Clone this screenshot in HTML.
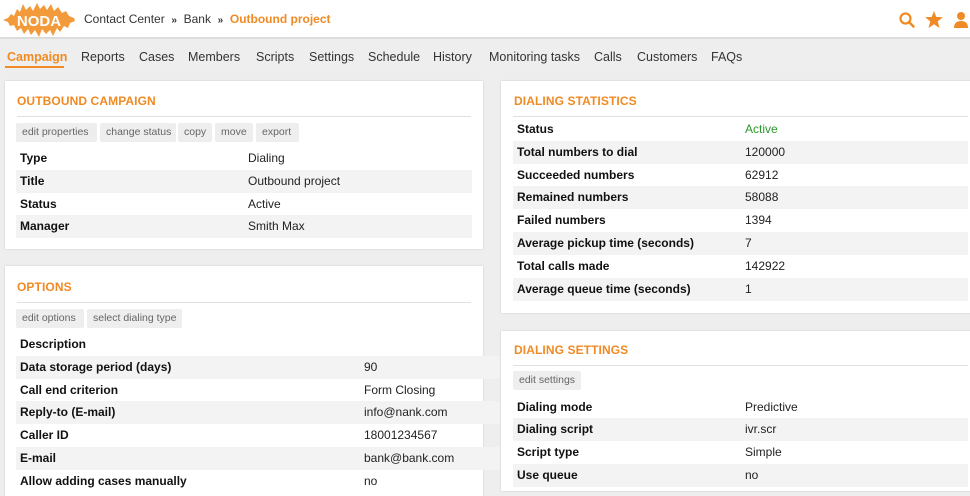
<!DOCTYPE html>
<html><head><meta charset="utf-8"><style>
*{margin:0;padding:0;box-sizing:border-box}
body{width:970px;height:480px;overflow:hidden;background:#eeeeee;font-family:"Liberation Sans",sans-serif;font-size:12px;color:#222;position:relative}
.a{position:absolute;white-space:nowrap}
#hdr{position:absolute;left:0;top:0;width:970px;height:39px;background:#fff;border-bottom:2px solid #dcdcdc}
.nav{position:absolute;top:50px;font-size:12.5px;color:#333;white-space:nowrap}
.card{position:absolute;background:#fff;box-shadow:0 0 2px rgba(0,0,0,.15)}
.ttl{position:absolute;color:#f08a24;font-weight:bold;font-size:12px;letter-spacing:.1px}
.ln{position:absolute;height:1px;background:#e0e0e0}
.btn{position:absolute;height:19px;line-height:19px;background:#eeeeee;color:#666;font-size:10.5px;padding:0 6px;border-radius:2px;white-space:nowrap}
.row{position:absolute;height:23px;line-height:23px;font-size:12px}
.row.s{background:#f3f3f3}
.row b{position:absolute;left:4px;font-weight:bold;color:#111}
.row span{position:absolute}
</style></head><body>
<div id="hdr"></div>
<svg class="a" style="left:2px;top:1px" width="74" height="38" viewBox="0 0 74 38">
<polygon fill="#f39a3a" points="1,19 6,17 9,13 12,15 15,8 18,11 21,3 24,9 28,5 31,10 35,2 38,8 42,4 45,9 49,3 52,10 56,6 60,12 64,10 67,15 72,17 73,20 68,22 66,27 62,25 58,31 55,27 51,35 48,29 44,33 40,28 37,36 33,29 29,34 26,28 22,33 19,27 15,30 12,24 8,25 6,21"/>
<text x="37" y="25" text-anchor="middle" fill="#fff" font-family="Liberation Sans" font-weight="bold" font-size="15">NODA</text>
</svg>
<div class="a" style="left:84px;top:12px;font-size:12px;color:#333">Contact Center &nbsp;<b style="font-size:10px">»</b>&nbsp; Bank &nbsp;<b style="font-size:10px">»</b>&nbsp; <b style="color:#f08a24">Outbound project</b></div>
<svg class="a" style="left:898px;top:11px" width="18" height="18" viewBox="0 0 18 18"><circle cx="7.5" cy="7.5" r="5" fill="none" stroke="#f08a24" stroke-width="2.2"/><line x1="11" y1="11" x2="15.5" y2="15.5" stroke="#f08a24" stroke-width="2.6" stroke-linecap="round"/></svg>
<svg class="a" style="left:925px;top:11px" width="18" height="17" viewBox="0 0 24 23"><polygon fill="#f08a24" points="12,0 15,8 24,8.5 17,14 19.5,23 12,18 4.5,23 7,14 0,8.5 9,8"/></svg>
<svg class="a" style="left:953px;top:11px" width="16" height="17" viewBox="0 0 16 17"><circle cx="8" cy="5" r="4" fill="#f08a24"/><path d="M1 17 Q1 10 8 10 Q15 10 15 17Z" fill="#f08a24"/></svg>

<div class="nav" style="left:7px;color:#f08a24;font-weight:bold">Campaign</div>
<div class="a" style="left:5px;top:66px;width:59px;height:2px;background:#f08a24"></div>
<div class="nav" style="left:81px">Reports</div>
<div class="nav" style="left:139px">Cases</div>
<div class="nav" style="left:188px">Members</div>
<div class="nav" style="left:256px">Scripts</div>
<div class="nav" style="left:309px">Settings</div>
<div class="nav" style="left:368px">Schedule</div>
<div class="nav" style="left:433px">History</div>
<div class="nav" style="left:489px">Monitoring tasks</div>
<div class="nav" style="left:594px">Calls</div>
<div class="nav" style="left:637px">Customers</div>
<div class="nav" style="left:711px">FAQs</div>

<!-- Outbound campaign -->
<div class="card" style="left:5px;top:81px;width:478px;height:168px"></div>
<div class="ttl" style="left:17px;top:94px">OUTBOUND CAMPAIGN</div>
<div class="ln" style="left:17px;top:116px;width:454px"></div>
<div class="btn" style="left:16px;top:123px;width:81px">edit properties</div>
<div class="btn" style="left:100px;top:123px;width:76px">change status</div>
<div class="btn" style="left:178px;top:123px;width:34px">copy</div>
<div class="btn" style="left:215px;top:123px;width:38px">move</div>
<div class="btn" style="left:256px;top:123px;width:43px">export</div>
<div class="row" style="left:16px;top:147px;width:456px"><b>Type</b><span style="left:232px">Dialing</span></div>
<div class="row s" style="left:16px;top:170px;width:456px"><b>Title</b><span style="left:232px">Outbound project</span></div>
<div class="row" style="left:16px;top:193px;width:456px"><b>Status</b><span style="left:232px">Active</span></div>
<div class="row s" style="left:16px;top:215px;width:456px"><b>Manager</b><span style="left:232px">Smith Max</span></div>

<!-- Options -->
<div class="card" style="left:5px;top:266px;width:478px;height:230px"></div>
<div class="ttl" style="left:17px;top:280px">OPTIONS</div>
<div class="ln" style="left:17px;top:302px;width:454px"></div>
<div class="btn" style="left:16px;top:309px;width:68px">edit options</div>
<div class="btn" style="left:87px;top:309px;width:95px">select dialing type</div>
<div class="row" style="left:16px;top:333px;width:484px"><b>Description</b></div>
<div class="row s" style="left:16px;top:356px;width:484px"><b>Data storage period (days)</b><span style="left:348px">90</span></div>
<div class="row" style="left:16px;top:379px;width:466px"><b>Call end criterion</b><span style="left:348px">Form Closing</span></div>
<div class="row s" style="left:16px;top:401px;width:484px"><b>Reply-to (E-mail)</b><span style="left:348px">info@nank.com</span></div>
<div class="row" style="left:16px;top:424px;width:466px"><b>Caller ID</b><span style="left:348px">18001234567</span></div>
<div class="row s" style="left:16px;top:447px;width:484px"><b>E-mail</b><span style="left:348px">bank@bank.com</span></div>
<div class="row" style="left:16px;top:470px;width:466px"><b>Allow adding cases manually</b><span style="left:348px">no</span></div>

<!-- Dialing statistics -->
<div class="card" style="left:501px;top:81px;width:475px;height:232px"></div>
<div class="ttl" style="left:514px;top:94px">DIALING STATISTICS</div>
<div class="ln" style="left:513px;top:116px;width:455px"></div>
<div class="row" style="left:513px;top:118px;width:455px"><b>Status</b><span style="left:232px;color:#2a9a2a">Active</span></div>
<div class="row s" style="left:513px;top:141px;width:455px"><b>Total numbers to dial</b><span style="left:232px">120000</span></div>
<div class="row" style="left:513px;top:164px;width:455px"><b>Succeeded numbers</b><span style="left:232px">62912</span></div>
<div class="row s" style="left:513px;top:186px;width:455px"><b>Remained numbers</b><span style="left:232px">58088</span></div>
<div class="row" style="left:513px;top:209px;width:455px"><b>Failed numbers</b><span style="left:232px">1394</span></div>
<div class="row s" style="left:513px;top:232px;width:455px"><b>Average pickup time (seconds)</b><span style="left:232px">7</span></div>
<div class="row" style="left:513px;top:255px;width:455px"><b>Total calls made</b><span style="left:232px">142922</span></div>
<div class="row s" style="left:513px;top:278px;width:455px"><b>Average queue time (seconds)</b><span style="left:232px">1</span></div>

<!-- Dialing settings -->
<div class="card" style="left:501px;top:331px;width:475px;height:160px"></div>
<div class="ttl" style="left:514px;top:343px">DIALING SETTINGS</div>
<div class="ln" style="left:513px;top:365px;width:455px"></div>
<div class="btn" style="left:513px;top:371px;width:68px">edit settings</div>
<div class="row" style="left:513px;top:396px;width:455px"><b>Dialing mode</b><span style="left:232px">Predictive</span></div>
<div class="row s" style="left:513px;top:418px;width:455px"><b>Dialing script</b><span style="left:232px">ivr.scr</span></div>
<div class="row" style="left:513px;top:441px;width:455px"><b>Script type</b><span style="left:232px">Simple</span></div>
<div class="row s" style="left:513px;top:464px;width:455px"><b>Use queue</b><span style="left:232px">no</span></div>
</body></html>
